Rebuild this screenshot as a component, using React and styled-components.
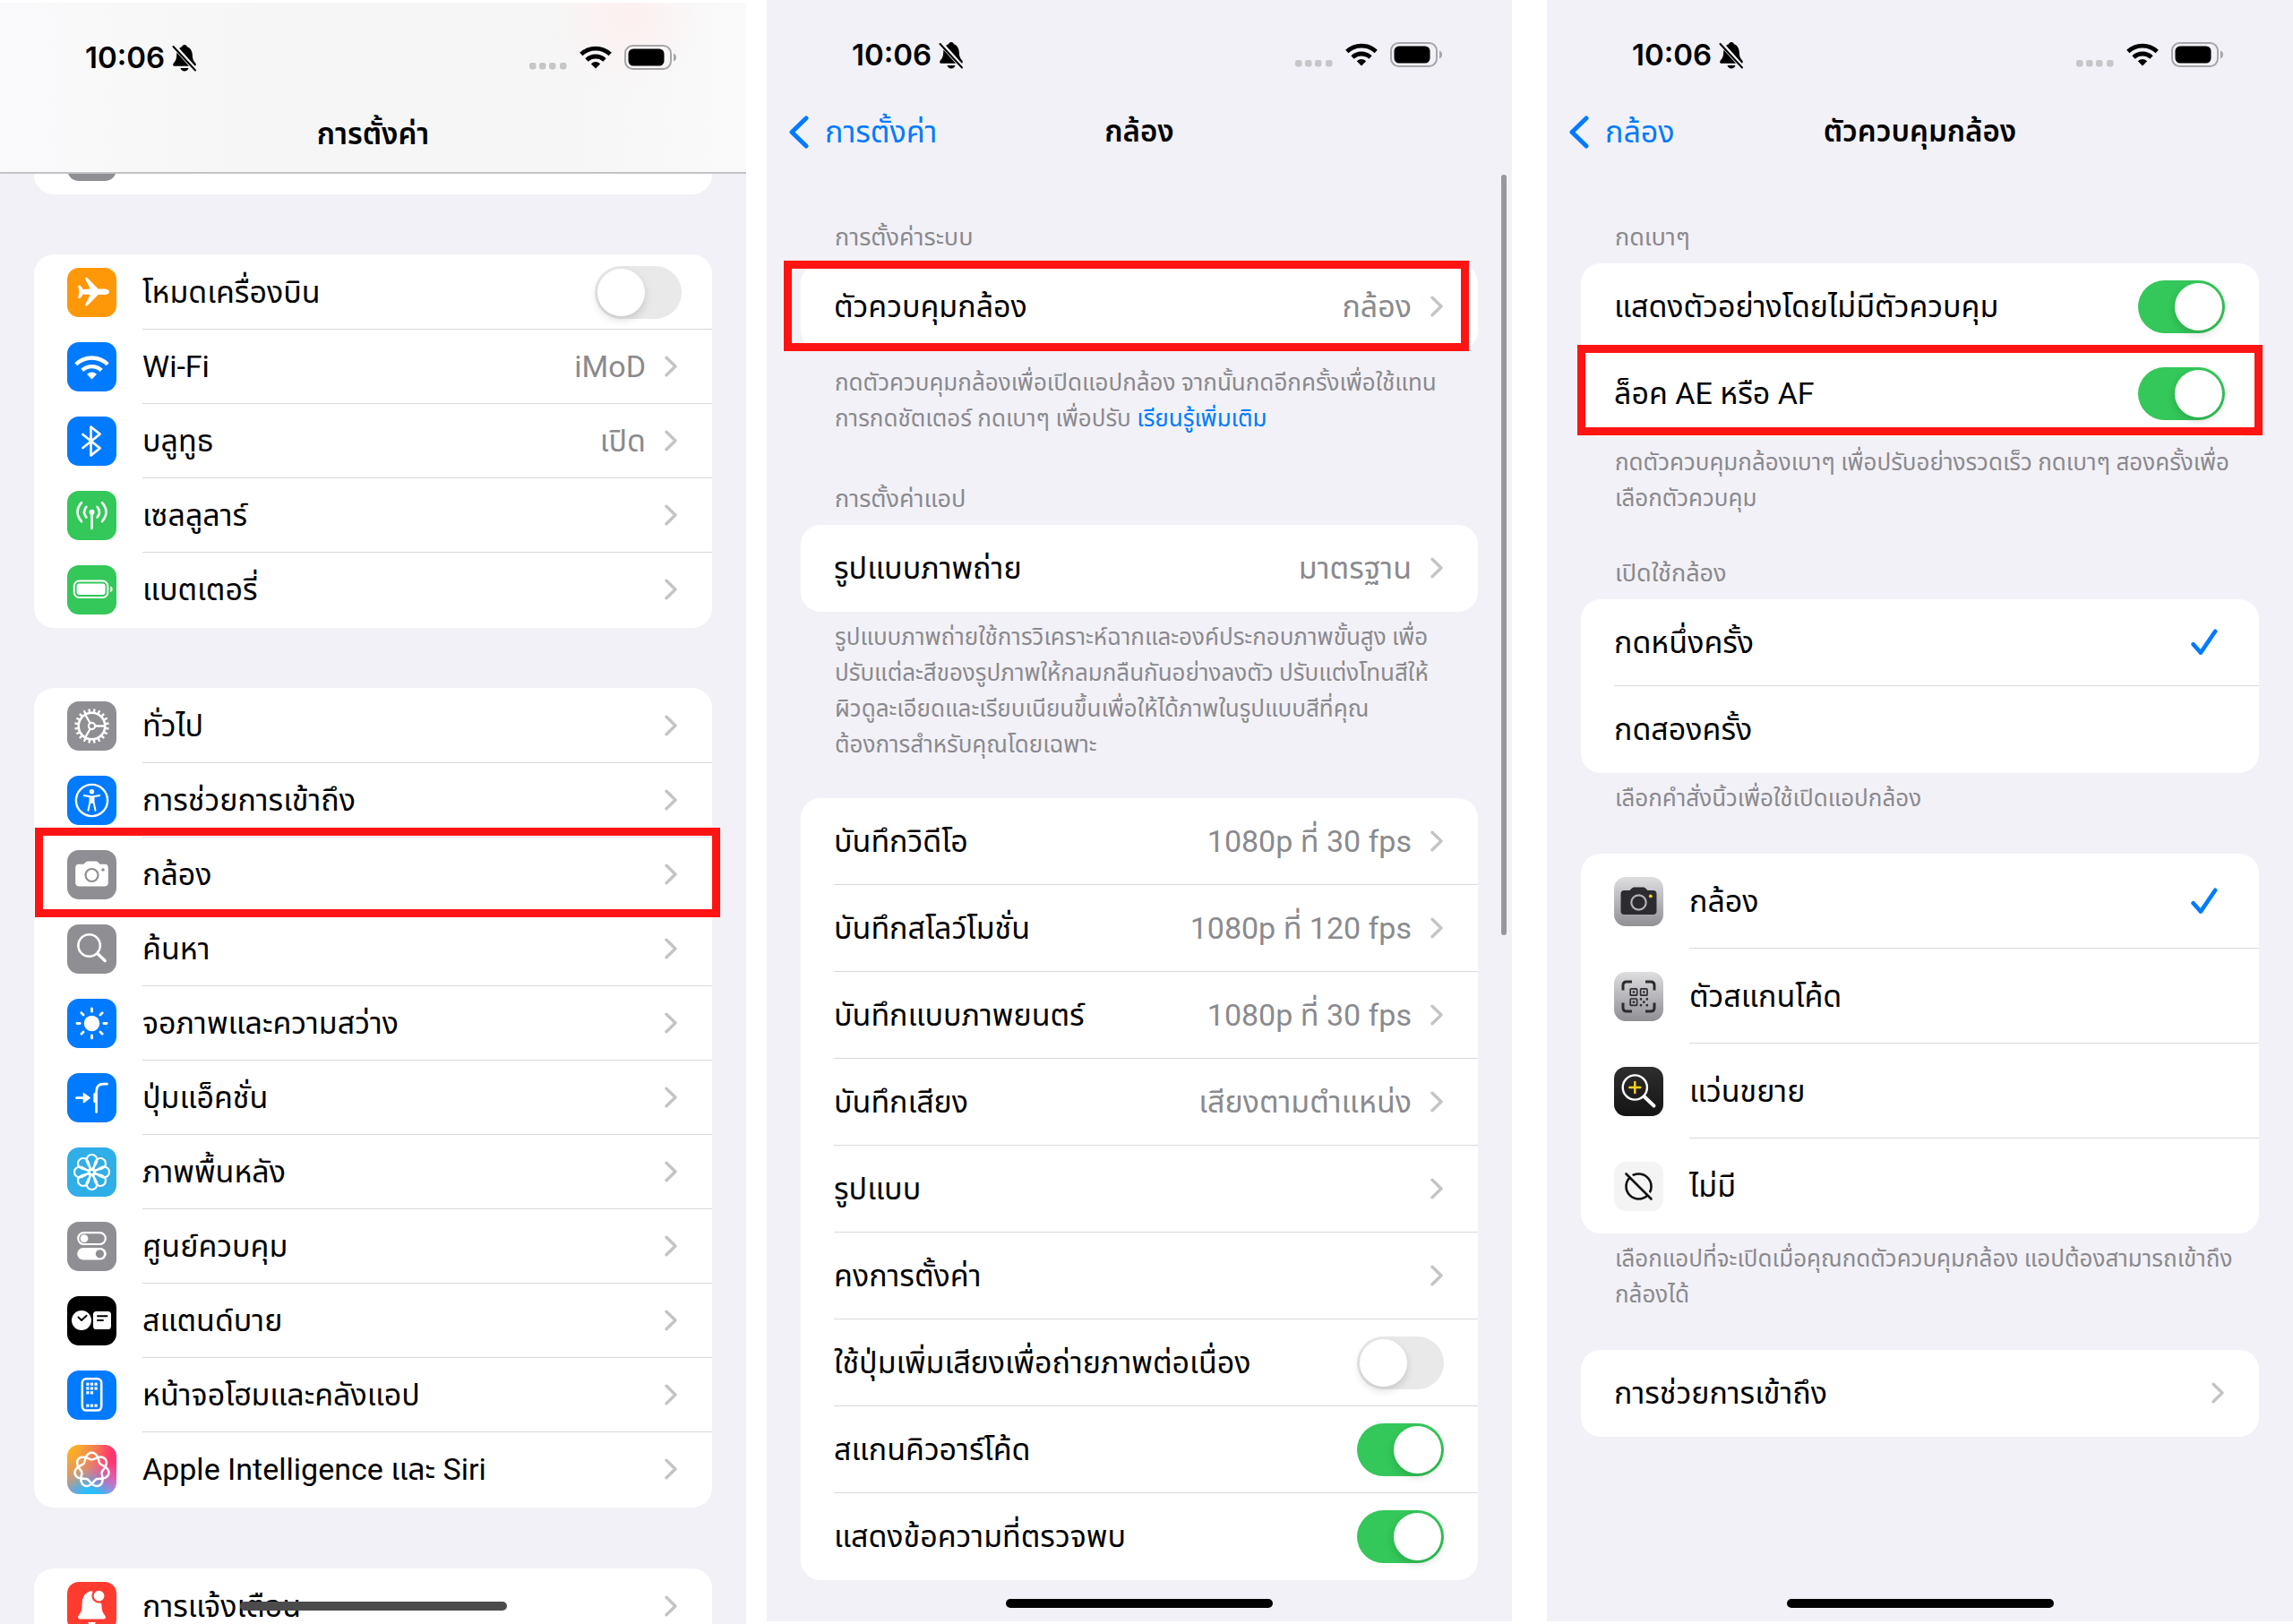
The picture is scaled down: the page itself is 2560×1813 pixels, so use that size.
import React, { useState } from "react";
import styled, { createGlobalStyle, css } from "styled-components";

const GlobalStyle = createGlobalStyle`
  *, *::before, *::after { box-sizing: border-box; }
  body {
    margin: 0;
    background: #ffffff;
    color: #000000;
    font-family: Roboto, "Noto Sans Thai", "Noto Sans", sans-serif;
    font-size: 34px;
    -webkit-font-smoothing: antialiased;
  }
  ul { list-style: none; margin: 0; padding: 0; }
  h1, h2, p { margin: 0; }
`;

/* ---------- layout ---------- */

const Page = styled.main`
  display: grid;
  grid-template-columns: 833fr 832fr 849fr;
  column-gap: 23px;
  height: 100vh;
  overflow: hidden;
`;

const Screen = styled.section`
  position: relative;
  display: flex;
  flex-direction: column;
  min-width: 0;
  overflow: hidden;
  background: #f2f1f7;
  margin-top: ${(p) => (p.$lowered ? "3px" : "0")};
  margin-bottom: ${(p) => (p.$lowered ? "0" : "3px")};
  margin-left: ${(p) => (p.$spaced ? "16px" : "0")};
`;

const Header = styled.header`
  flex: none;
  z-index: 1;
  height: 191px;
  ${(p) =>
    p.$floating &&
    css`
      background:
        radial-gradient(circle at 84% 6%, #fdf0f0 0, rgba(253, 240, 240, 0) 90px),
        linear-gradient(90deg, #fafafc 0, #f6f6f6 35%, #f6f6f6 75%, #fafafb 100%);
      border-bottom: 2px solid #c3c3c6;
    `}
`;

const StatusBar = styled.div`
  display: flex;
  align-items: center;
  height: 122px;
  padding: 0 77px 0 95px;
`;

const Clock = styled.time`
  font-family: Inter, Roboto, sans-serif;
  font-size: 33px;
  font-weight: 600;
  line-height: 40px;
  margin-right: 8px;
`;

const StatusIcons = styled.div`
  display: flex;
  align-items: center;
  gap: 14px;
  margin-left: auto;
`;

const DotsSlot = styled.span`
  align-self: flex-end;
`;

const NavBar = styled.nav`
  display: grid;
  grid-template-columns: 1fr auto 1fr;
  align-items: center;
  height: 50px;
  padding: 0 24px;
`;

const BackLink = styled.a`
  display: flex;
  align-items: center;
  gap: 18px;
  color: #007aff;
  text-decoration: none;
  line-height: 50px;
`;

const Title = styled.h1`
  grid-column: 2;
  font-size: 33px;
  font-weight: 600;
  line-height: 50px;
  white-space: nowrap;
`;

const Content = styled.div`
  flex: 1;
  min-height: 0;
  padding: 52px 38px 0;
  ${(p) =>
    p.$scrolled &&
    css`
      padding-top: 0;
      & > :first-child { margin-top: -62px; }
    `}
`;

const Group = styled.section`
  margin-bottom: ${(p) => p.$gap}px;
`;

const GroupTitle = styled.h2`
  padding: 2px 38px 9px;
  color: #8a898e;
  font-size: 27px;
  font-weight: 400;
  line-height: 40px;
  white-space: nowrap;
`;

const Footnote = styled.p`
  padding: ${(p) => (p.$roomy ? "16px 0 8px 38px" : "8px 0 2px 38px")};
  color: #8a898e;
  font-size: 26px;
  line-height: 40px;
  white-space: nowrap;
`;

const LearnMore = styled.a`
  color: #007aff;
  text-decoration: none;
`;

const Card = styled.ul`
  padding: ${(p) => (p.$padded ? "1px 0" : "0")};
  border-radius: 22px;
  background: #ffffff;
`;

const Row = styled.li`
  position: relative;
  display: flex;
  align-items: center;
  height: ${(p) => p.$height}px;
  padding-left: 37px;
`;

const RowBody = styled.div`
  flex: 1;
  align-self: stretch;
  display: flex;
  min-width: 0;
  border-bottom: 1px solid ${(p) => (p.$last ? "transparent" : "#d9d9dc")};
  margin-left: ${(p) => (p.$indented ? "29px" : "0")};
`;

const rowInner = css`
  flex: 1;
  display: flex;
  align-items: center;
  color: inherit;
  text-decoration: none;
  line-height: 40px;
  white-space: nowrap;
`;

const RowLink = styled.a`
  ${rowInner}
  padding-right: 39px;
`;

const RowLabel = styled.label`
  ${rowInner}
  padding-right: ${(p) => p.$inset}px;
`;

const RowText = styled.span`
  flex: 1;
`;

const RowValue = styled.span`
  color: #8a8a8e;
  margin-right: 21px;
`;

const Highlight = styled.span`
  position: absolute;
  inset: ${(p) => p.$inset};
  border: 9px solid #ff1414;
  pointer-events: none;
  z-index: 1;
`;

const Tile = styled.span`
  flex: none;
  display: block;
  width: 55px;
  height: 55px;
  border-radius: 13px;
  overflow: hidden;
  background: ${(p) => p.$fill};
`;

const Switch = styled.input`
  appearance: none;
  flex: none;
  width: 97px;
  height: 59px;
  margin: 0;
  padding: 3px;
  border-radius: 30px;
  background: #e9e9ea;
  &::before {
    content: "";
    display: block;
    width: 53px;
    height: 53px;
    border-radius: 50%;
    background: #ffffff;
    box-shadow: 0 4px 10px rgba(0, 0, 0, 0.15);
  }
  &:checked { background: #34c759; }
  &:checked::before { margin-left: auto; }
`;

const HiddenRadio = styled.input`
  appearance: none;
  width: 0;
  height: 0;
  margin: 0;
  & + svg { visibility: hidden; }
  &:checked + svg { visibility: visible; }
`;

const ScrollThumb = styled.div`
  position: absolute;
  top: 195px;
  right: 6px;
  width: 6px;
  height: 849px;
  border-radius: 3px;
  background: #98979c;
`;

const HomeIndicator = styled.div`
  position: absolute;
  bottom: 15px;
  left: 50%;
  width: 298px;
  height: 10px;
  margin-left: -149px;
  border-radius: 5px;
  background: ${(p) => (p.$soft ? "#4b4b4b" : "#000000")};
  z-index: 2;
`;

const Svg = styled.svg`
  display: block;
  flex: none;
  fill: none;
  stroke-linecap: round;
  stroke-linejoin: round;
`;

/* ---------- small drawings ---------- */

const Chevron = () => (
  <Svg width="14" height="24" viewBox="0 0 14 24" stroke="#c4c4c6" strokeWidth="3.4">
    <path d="M2 2.2 L12 12 L2 21.8" />
  </Svg>
);

const BackChevron = () => (
  <Svg width="23" height="37" viewBox="0 0 23 37" stroke="#007aff" strokeWidth="5">
    <path d="M20 3 L4 18.5 L20 34" />
  </Svg>
);

const Check = () => (
  <Svg width="30" height="30" viewBox="0 0 30 30" stroke="#007aff" strokeWidth="4.6">
    <path d="M2.6 17.2 L11 26.6 L27.2 2.8" />
  </Svg>
);

const MutedBell = () => (
  <Svg width="28" height="31" viewBox="0 0 28 31">
    <path
      fill="#000"
      d="M14 1 c1.8 0 2.6 1 2.8 2.2 c4 1.3 5.8 4.8 6 9 c.2 5 1.2 6.8 3.4 9.2 c1 1.2 .8 3.4 -1.4 3.4 H3.2 c-2.2 0 -2.4 -2.2 -1.4 -3.4 C4 19 5 17.2 5.2 12.2 c.2 -4.2 2 -7.7 6 -9 C11.4 2 12.2 1 14 1 Z M9.500 27 h9 c-.6 2.2 -2.3 3.4 -4.5 3.4 s-3.9 -1.2 -4.5 -3.4 Z"
    />
    <path d="M2.5 2.5 L27 30" stroke="#f5f5f8" strokeWidth="5" />
    <path d="M1.5 3 L26 29.5" stroke="#000" strokeWidth="2" />
  </Svg>
);

const SignalDots = () => (
  <DotsSlot>
    <Svg width="42" height="8" viewBox="0 0 42 8">
      {[0, 11, 22, 34].map((x) => (
        <rect key={x} x={x} y="0" width="7.5" height="7.5" rx="2.4" fill="#c6c6c9" />
      ))}
    </Svg>
  </DotsSlot>
);

const StatusWifi = () => (
  <Svg width="36" height="26" viewBox="0 0 36 26" stroke="#000" strokeWidth="4.8">
    <g strokeLinecap="butt">
      <path d="M1.8 9.6 A23.5 23.5 0 0 1 34.2 9.6" />
      <path d="M8 16 A14.5 14.5 0 0 1 28 16" />
    </g>
    <path d="M12.8 20.2 Q18 15.8 23.2 20.2 L18 25.6 Z" fill="#000" stroke="none" />
  </Svg>
);

const StatusBattery = () => (
  <Svg width="59" height="28" viewBox="0 0 59 28">
    <rect x="1" y="1" width="51" height="26" rx="8.5" stroke="#a6a6a8" strokeWidth="2" />
    <rect x="4.5" y="4.5" width="40" height="19" rx="5.5" fill="#000" />
    <path d="M55 9.5 c4 1 4 8 0 9 Z" fill="#a6a6a8" />
  </Svg>
);

/* ---------- tile glyphs, all on a 55 unit grid ---------- */

const Glyph = ({ children, ...rest }) => (
  <Svg width="55" height="55" viewBox="0 0 55 55" {...rest}>
    {children}
  </Svg>
);

const around = (count, start = 0) => Array.from({ length: count }, (_, i) => start + (i * 360) / count);

const knot = (() => {
  const points = [];
  for (let i = 0; i <= 280; i += 1) {
    const t = (i / 280) * Math.PI * 4;
    const r = 15.4 + 3.9 * Math.cos(3.5 * t);
    points.push(`${(27.5 + r * Math.sin(t)).toFixed(2)} ${(28 - r * Math.cos(t)).toFixed(2)}`);
  }
  return `M${points.join("L")}Z`;
})();

const glyphs = {
  airplane: (
    <Glyph>
      <path
        fill="#fff"
        d="M47 26.7 C47 28.8 44 29.9 41 29.9 H34.6 L22.8 42 C22 42.8 19.6 42.9 20 41.4 L25.6 29.9 L17.8 29.5 L15.2 33.2 C14.4 34.3 12.2 34.3 12.2 33 L13.4 26.7 L12.2 20.4 C12.2 19.1 14.4 19.1 15.2 20.2 L17.8 23.9 L25.6 23.5 L20 12 C19.6 10.5 22 10.6 22.8 11.4 L34.6 23.5 H41 C44 23.5 47 24.6 47 26.7 Z"
      />
    </Glyph>
  ),
  wifi: (
    <Glyph stroke="#fff" strokeWidth="4.4">
      <g strokeLinecap="butt">
        <path d="M9.8 24.8 A25 25 0 0 1 45.2 24.8" />
        <path d="M16.8 31.4 A15.5 15.5 0 0 1 38.2 31.4" />
      </g>
      <path d="M22 35.8 Q27.5 31 33 35.8 L27.5 41.4 Z" fill="#fff" stroke="none" />
    </Glyph>
  ),
  bluetooth: (
    <Glyph stroke="#fff" strokeWidth="2.7">
      <path d="M17.5 20 L36.5 35.4 L26.5 43.5 V11.5 L36.5 19.6 L17.5 35" />
    </Glyph>
  ),
  cellular: (
    <Glyph stroke="#fff" strokeWidth="2.6">
      <path d="M27.5 24 V42" />
      <circle cx="27.5" cy="23.7" r="3" fill="#fff" stroke="none" />
      <path d="M21.4 17.8 Q16.6 23.6 21.4 29.6 M33.6 17.8 Q38.4 23.6 33.6 29.6 M16 13.2 Q7 23.6 16 34.2 M39 13.2 Q48 23.6 39 34.2" />
    </Glyph>
  ),
  battery: (
    <Glyph>
      <rect x="7.8" y="17.6" width="37.5" height="18.4" rx="5.6" stroke="#fff" strokeWidth="2" />
      <rect x="10.6" y="20.6" width="32" height="12.5" rx="3" fill="#fff" />
      <path d="M48.2 23.6 c3.3 1 3.3 5.6 0 6.6 Z" fill="#fff" />
    </Glyph>
  ),
  gear: (
    <Glyph stroke="#fff">
      <circle cx="27.5" cy="27.5" r="14.8" strokeWidth="2.6" />
      <g strokeWidth="2.4" strokeLinecap="butt">
        {around(20, 9).map((a) => (
          <path key={a} d="M27.5 12.5 V8.2" transform={`rotate(${a} 27.5 27.5)`} />
        ))}
      </g>
      <circle cx="27.5" cy="27.5" r="3.6" strokeWidth="2.2" />
      <g strokeWidth="2.3">
        {around(3, 90).map((a) => (
          <path key={a} d="M27.5 23.5 V13.5" transform={`rotate(${a} 27.5 27.5)`} />
        ))}
      </g>
    </Glyph>
  ),
  accessibility: (
    <Glyph stroke="#fff">
      <circle cx="27.5" cy="27.5" r="17.6" strokeWidth="2.4" />
      <circle cx="27.5" cy="17.8" r="2.7" fill="#fff" stroke="none" />
      <path
        d="M18.8 22 L25.5 23.2 V29 L23.5 38.8 M36.2 22 L29.5 23.2 V29 L31.5 38.8"
        strokeWidth="2"
      />
      <path d="M25 22.5 H30 V30.5 L27.5 31 L25 30.5 Z" fill="#fff" stroke="none" />
    </Glyph>
  ),
  camera: (
    <Glyph>
      <path
        fill="#fff"
        d="M13 15.8 H18.5 L20.6 13.6 Q21.6 12.6 23 12.6 H32 Q33.4 12.6 34.4 13.6 L36.5 15.8 H42 Q45.8 15.8 45.8 19.6 V36.6 Q45.8 40.4 42 40.4 H13 Q9.2 40.4 9.2 36.6 V19.6 Q9.2 15.8 13 15.8 Z"
      />
      <circle cx="27.5" cy="28" r="7" stroke="#8e8e93" strokeWidth="2.2" />
      <circle cx="40" cy="22" r="1.8" fill="#8e8e93" />
    </Glyph>
  ),
  search: (
    <Glyph stroke="#fff" strokeWidth="2.6">
      <circle cx="24.6" cy="23.5" r="12.2" />
      <path d="M33.8 32.6 L42.2 40.6" strokeWidth="3.4" />
    </Glyph>
  ),
  sun: (
    <Glyph stroke="#fff" strokeWidth="2.8">
      <circle cx="27.5" cy="27.5" r="8.7" fill="#fff" stroke="none" />
      {around(8).map((a) => (
        <path key={a} d="M27.5 14.2 V11" transform={`rotate(${a} 27.5 27.5)`} />
      ))}
    </Glyph>
  ),
  action: (
    <Glyph stroke="#fff" strokeWidth="2.7">
      <path d="M10.5 27.7 H20" />
      <path d="M18.5 22.8 L25 27.7 L18.5 32.6 Z" fill="#fff" strokeWidth="1.6" />
      <path d="M32.6 43.5 V20.5 Q32.6 12.2 40.5 12.2 H44.5" />
      <path d="M30.8 23.5 V31.5" strokeWidth="3" />
    </Glyph>
  ),
  flower: (
    <Glyph stroke="#fff" strokeWidth="2.2">
      {around(8).map((a) => (
        <path
          key={a}
          d="M27.5 25 C24.5 21 21.6 17.5 21.6 13.9 A5.9 5.9 0 0 1 33.4 13.9 C33.4 17.5 30.5 21 27.5 25 Z"
          transform={`rotate(${a} 27.5 27.5)`}
        />
      ))}
    </Glyph>
  ),
  controls: (
    <Glyph>
      <rect x="12.2" y="12.2" width="30.6" height="12.8" rx="6.4" stroke="#fff" strokeWidth="2.2" />
      <circle cx="19" cy="18.6" r="4.4" fill="#fff" />
      <rect x="11.2" y="29" width="32.6" height="13.6" rx="6.8" fill="#fff" />
      <circle cx="36.4" cy="35.8" r="4.6" fill="#8e8e93" />
    </Glyph>
  ),
  standby: (
    <Glyph strokeWidth="1.9">
      <circle cx="16" cy="27" r="11" fill="#fff" />
      <path d="M12.4 23.4 L16 27 L21.6 21.8" stroke="#000" />
      <rect x="29" y="17" width="20" height="20" rx="3.6" fill="#fff" />
      <path d="M34 22.2 H44.5 M34 27 H40" stroke="#000" />
    </Glyph>
  ),
  home: (
    <Glyph>
      <rect x="16.8" y="9.3" width="21.4" height="35.2" rx="4.4" stroke="#fff" strokeWidth="2.6" />
      <g fill="#fff">
        {[
          [0, 0], [1, 0], [2, 0], [0, 1], [1, 1], [2, 1], [0, 2], [1, 2], [0, 5], [1, 5], [2, 5],
        ].map(([c, r]) => (
          <rect key={`${c}-${r}`} x={21.3 + c * 4.6} y={13.6 + r * 4.8} width="3.2" height="3.2" />
        ))}
      </g>
    </Glyph>
  ),
  intelligence: (
    <Glyph stroke="#fff" strokeWidth="2.5">
      <path d={knot} />
    </Glyph>
  ),
  bell: (
    <Glyph>
      <path
        fill="#fff"
        d="M27.5 10 C19.5 11.5 16.8 17 16.6 25 C16.4 32 15.5 34 12.5 38 C11.5 40 12.5 41.5 14.5 41.5 H40.5 C42.5 41.5 43.5 40 42.5 38 C39.5 34 38.6 32 38.4 25 Z M23 45 H32 Q30.5 48.5 27.5 48.5 Q24.5 48.5 23 45 Z"
      />
      <circle cx="35.5" cy="15.6" r="7" fill="#fff" stroke="#ff3b30" strokeWidth="2.2" />
    </Glyph>
  ),
  cameraApp: (
    <Glyph>
      <path
        fill="#2c2b30"
        d="M11.5 15 H17.5 L20 12.6 Q21 11.6 22.5 11.6 H32.5 Q34 11.6 35 12.6 L37.5 15 H43.5 Q47.5 15 47.5 19 V38 Q47.5 42 43.5 42 H11.5 Q7.5 42 7.5 38 V19 Q7.5 15 11.5 15 Z"
      />
      <circle cx="27.5" cy="28.5" r="8.2" stroke="#b4b4b8" strokeWidth="2.2" />
      <circle cx="40.8" cy="21.4" r="1.9" fill="#ffd21f" />
    </Glyph>
  ),
  codeScanner: (
    <Glyph stroke="#2c2b30" strokeWidth="3">
      <path
        strokeLinecap="butt"
        d="M10 20.5 V15 Q10 11 14 11 H20 M35 11 H41 Q45 11 45 15 V20.5 M45 34.5 V40 Q45 44 41 44 H35 M20 44 H14 Q10 44 10 40 V34.5"
      />
      <g strokeWidth="1.7">
        <rect x="18.2" y="18.8" width="7.4" height="7.4" rx="1" />
        <rect x="29.6" y="18.8" width="7.4" height="7.4" rx="1" />
        <rect x="18.2" y="30" width="7.4" height="7.4" rx="1" />
      </g>
      <g fill="#2c2b30" stroke="none">
        <rect x="20.7" y="21.3" width="2.4" height="2.4" />
        <rect x="32.1" y="21.3" width="2.4" height="2.4" />
        <rect x="20.7" y="32.5" width="2.4" height="2.4" />
        <rect x="28.8" y="29.2" width="2.4" height="2.4" />
        <rect x="35.6" y="29.2" width="2.4" height="2.4" />
        <rect x="32.1" y="32.5" width="2.4" height="2.4" />
        <rect x="28.8" y="36" width="2.4" height="2.4" />
        <rect x="35.6" y="36" width="2.4" height="2.4" />
      </g>
    </Glyph>
  ),
  magnifier: (
    <Glyph stroke="#fff" strokeWidth="2.4">
      <circle cx="23.3" cy="23" r="13.6" />
      <path d="M33.5 33 L44.5 43.5" strokeWidth="4" />
      <path d="M23.3 17 V29 M17.3 23 H29.3" stroke="#ffd21f" />
    </Glyph>
  ),
  none: (
    <Glyph stroke="#111" strokeWidth="2.6">
      <circle cx="27.5" cy="27.5" r="14" />
      <path d="M16 12.5 L45 41.5" stroke="#f4f4f4" strokeWidth="3" strokeLinecap="butt" />
      <path d="M13.5 13.5 L41.5 41.5" />
    </Glyph>
  ),
};

const GREY = "#8e8e93";
const BLUE = "#007aff";
const GREEN = "#34c759";
const SILVER = "linear-gradient(#dedee1, #909094)";
const SPECTRUM =
  "radial-gradient(circle at 0% 0%, #ffae1f 10%, rgba(255,174,31,0) 65%), radial-gradient(circle at 100% 15%, #ff3570 15%, rgba(255,53,112,0) 70%), radial-gradient(circle at 50% 105%, #2dbcf8 15%, rgba(45,188,248,0) 60%), radial-gradient(circle at 100% 80%, #d58bff 20%, rgba(213,139,255,0) 60%), #c98a9a";

/* ---------- data ---------- */

const connectivity = [
  { label: "โหมดเครื่องบิน", glyph: "airplane", fill: "#ff9808", toggle: false },
  { label: "Wi-Fi", glyph: "wifi", fill: BLUE, value: "iMoD" },
  { label: "บลูทูธ", glyph: "bluetooth", fill: BLUE, value: "เปิด" },
  { label: "เซลลูลาร์", glyph: "cellular", fill: GREEN },
  { label: "แบตเตอรี่", glyph: "battery", fill: GREEN },
];

const system = [
  { label: "ทั่วไป", glyph: "gear", fill: GREY },
  { label: "การช่วยการเข้าถึง", glyph: "accessibility", fill: BLUE },
  { label: "กล้อง", glyph: "camera", fill: GREY, highlight: "-11px -9px -6px 1px" },
  { label: "ค้นหา", glyph: "search", fill: GREY },
  { label: "จอภาพและความสว่าง", glyph: "sun", fill: BLUE },
  { label: "ปุ่มแอ็คชั่น", glyph: "action", fill: BLUE },
  { label: "ภาพพื้นหลัง", glyph: "flower", fill: "#30aee8" },
  { label: "ศูนย์ควบคุม", glyph: "controls", fill: GREY },
  { label: "สแตนด์บาย", glyph: "standby", fill: "#000000" },
  { label: "หน้าจอโฮมและคลังแอป", glyph: "home", fill: BLUE },
  { label: "Apple Intelligence และ Siri", glyph: "intelligence", fill: SPECTRUM },
];

const capture = [
  { label: "บันทึกวิดีโอ", value: "1080p ที่ 30 fps" },
  { label: "บันทึกสโลว์โมชั่น", value: "1080p ที่ 120 fps" },
  { label: "บันทึกแบบภาพยนตร์", value: "1080p ที่ 30 fps" },
  { label: "บันทึกเสียง", value: "เสียงตามตำแหน่ง" },
  { label: "รูปแบบ" },
  { label: "คงการตั้งค่า" },
  { label: "ใช้ปุ่มเพิ่มเสียงเพื่อถ่ายภาพต่อเนื่อง", toggle: false },
  { label: "สแกนคิวอาร์โค้ด", toggle: true },
  { label: "แสดงข้อความที่ตรวจพบ", toggle: true },
];

const lightPress = [
  { label: "แสดงตัวอย่างโดยไม่มีตัวควบคุม", toggle: true },
  { label: "ล็อค AE หรือ AF", toggle: true, highlight: "-6px -4px 2px -4px" },
];

const launchGestures = [{ label: "กดหนึ่งครั้ง" }, { label: "กดสองครั้ง" }];

const launchApps = [
  { label: "กล้อง", glyph: "cameraApp", fill: SILVER },
  { label: "ตัวสแกนโค้ด", glyph: "codeScanner", fill: SILVER },
  { label: "แว่นขยาย", glyph: "magnifier", fill: "linear-gradient(#2e2e2e, #141414)" },
  { label: "ไม่มี", glyph: "none", fill: "#f4f4f4" },
];

/* ---------- composed parts ---------- */

function ToggleControl({ label, initial, inset }) {
  const [on, setOn] = useState(initial);
  return (
    <RowLabel $inset={inset}>
      <RowText>{label}</RowText>
      <Switch type="checkbox" role="switch" checked={on} onChange={() => setOn(!on)} />
    </RowLabel>
  );
}

function SettingRow({ item, height, last, choice }) {
  return (
    <Row $height={height}>
      {item.glyph && <Tile $fill={item.fill}>{glyphs[item.glyph]}</Tile>}
      <RowBody $last={last} $indented={Boolean(item.glyph)}>
        {choice ? (
          <RowLabel $inset={46}>
            <RowText>{item.label}</RowText>
            <HiddenRadio
              type="radio"
              name={choice.name}
              checked={choice.selected === item.label}
              onChange={() => choice.select(item.label)}
            />
            <Check />
          </RowLabel>
        ) : item.toggle !== undefined ? (
          <ToggleControl label={item.label} initial={item.toggle} inset={item.glyph ? 34 : 38} />
        ) : (
          <RowLink href="#">
            <RowText>{item.label}</RowText>
            {item.value && <RowValue>{item.value}</RowValue>}
            <Chevron />
          </RowLink>
        )}
      </RowBody>
      {item.highlight && <Highlight $inset={item.highlight} />}
    </Row>
  );
}

function SettingList({ items, height = 97, padded, choice }) {
  return (
    <Card $padded={padded}>
      {items.map((item, i) => (
        <SettingRow
          key={item.label}
          item={item}
          height={height}
          last={i === items.length - 1}
          choice={choice}
        />
      ))}
    </Card>
  );
}

function ChoiceList({ items, height, name }) {
  const [selected, select] = useState(items[0].label);
  return <SettingList items={items} height={height} choice={{ name, selected, select }} />;
}

function ScreenHeader({ title, back, floating }) {
  return (
    <Header $floating={floating}>
      <StatusBar>
        <Clock>10:06</Clock>
        <MutedBell />
        <StatusIcons>
          <SignalDots />
          <StatusWifi />
          <StatusBattery />
        </StatusIcons>
      </StatusBar>
      <NavBar>
        {back && (
          <BackLink href="#">
            <BackChevron />
            {back}
          </BackLink>
        )}
        <Title>{title}</Title>
      </NavBar>
    </Header>
  );
}

export default function App() {
  return (
    <>
      <GlobalStyle />
      <Page>
        <Screen $lowered>
          <ScreenHeader title="การตั้งค่า" floating />
          <Content $scrolled>
            <Group $gap={67}>
              <Card $padded>
                <Row $height={83}>
                  <Tile $fill={GREY} />
                </Row>
              </Card>
            </Group>
            <Group $gap={67}>
              <SettingList items={connectivity} height={83} padded />
            </Group>
            <Group $gap={68}>
              <SettingList items={system} height={83} padded />
            </Group>
            <Group $gap={0}>
              <SettingList
                items={[{ label: "การแจ้งเตือน", glyph: "bell", fill: "#ff3b30" }]}
                height={83}
                padded
              />
            </Group>
          </Content>
          <HomeIndicator $soft />
        </Screen>

        <Screen>
          <ScreenHeader title="กล้อง" back="การตั้งค่า" />
          <Content>
            <Group $gap={40}>
              <GroupTitle>การตั้งค่าระบบ</GroupTitle>
              <SettingList
                items={[{ label: "ตัวควบคุมกล้อง", value: "กล้อง", highlight: "-3px 10px -1px -19px" }]}
              />
              <Footnote $roomy>
                กดตัวควบคุมกล้องเพื่อเปิดแอปกล้อง จากนั้นกดอีกครั้งเพื่อใช้แทน
                <br />
                การกดชัตเตอร์ กดเบาๆ เพื่อปรับ <LearnMore href="#">เรียนรู้เพิ่มเติม</LearnMore>
              </Footnote>
            </Group>
            <Group $gap={38}>
              <GroupTitle>การตั้งค่าแอป</GroupTitle>
              <SettingList items={[{ label: "รูปแบบภาพถ่าย", value: "มาตรฐาน" }]} />
              <Footnote>
                รูปแบบภาพถ่ายใช้การวิเคราะห์ฉากและองค์ประกอบภาพขั้นสูง เพื่อ
                <br />
                ปรับแต่ละสีของรูปภาพให้กลมกลืนกันอย่างลงตัว ปรับแต่งโทนสีให้
                <br />
                ผิวดูละเอียดและเรียบเนียนขึ้นเพื่อให้ได้ภาพในรูปแบบสีที่คุณ
                <br />
                ต้องการสำหรับคุณโดยเฉพาะ
              </Footnote>
            </Group>
            <Group $gap={0}>
              <SettingList items={capture} />
            </Group>
          </Content>
          <ScrollThumb />
          <HomeIndicator />
        </Screen>

        <Screen $spaced>
          <ScreenHeader title="ตัวควบคุมกล้อง" back="กล้อง" />
          <Content>
            <Group $gap={40}>
              <GroupTitle>กดเบาๆ</GroupTitle>
              <SettingList items={lightPress} />
              <Footnote>
                กดตัวควบคุมกล้องเบาๆ เพื่อปรับอย่างรวดเร็ว กดเบาๆ สองครั้งเพื่อ
                <br />
                เลือกตัวควบคุม
              </Footnote>
            </Group>
            <Group $gap={40}>
              <GroupTitle>เปิดใช้กล้อง</GroupTitle>
              <ChoiceList items={launchGestures} height={97} name="gesture" />
              <Footnote>เลือกคำสั่งนิ้วเพื่อใช้เปิดแอปกล้อง</Footnote>
            </Group>
            <Group $gap={40}>
              <ChoiceList items={launchApps} height={106} name="app" />
              <Footnote>
                เลือกแอปที่จะเปิดเมื่อคุณกดตัวควบคุมกล้อง แอปต้องสามารถเข้าถึง
                <br />
                กล้องได้
              </Footnote>
            </Group>
            <Group $gap={0}>
              <SettingList items={[{ label: "การช่วยการเข้าถึง" }]} />
            </Group>
          </Content>
          <HomeIndicator />
        </Screen>
      </Page>
    </>
  );
}
